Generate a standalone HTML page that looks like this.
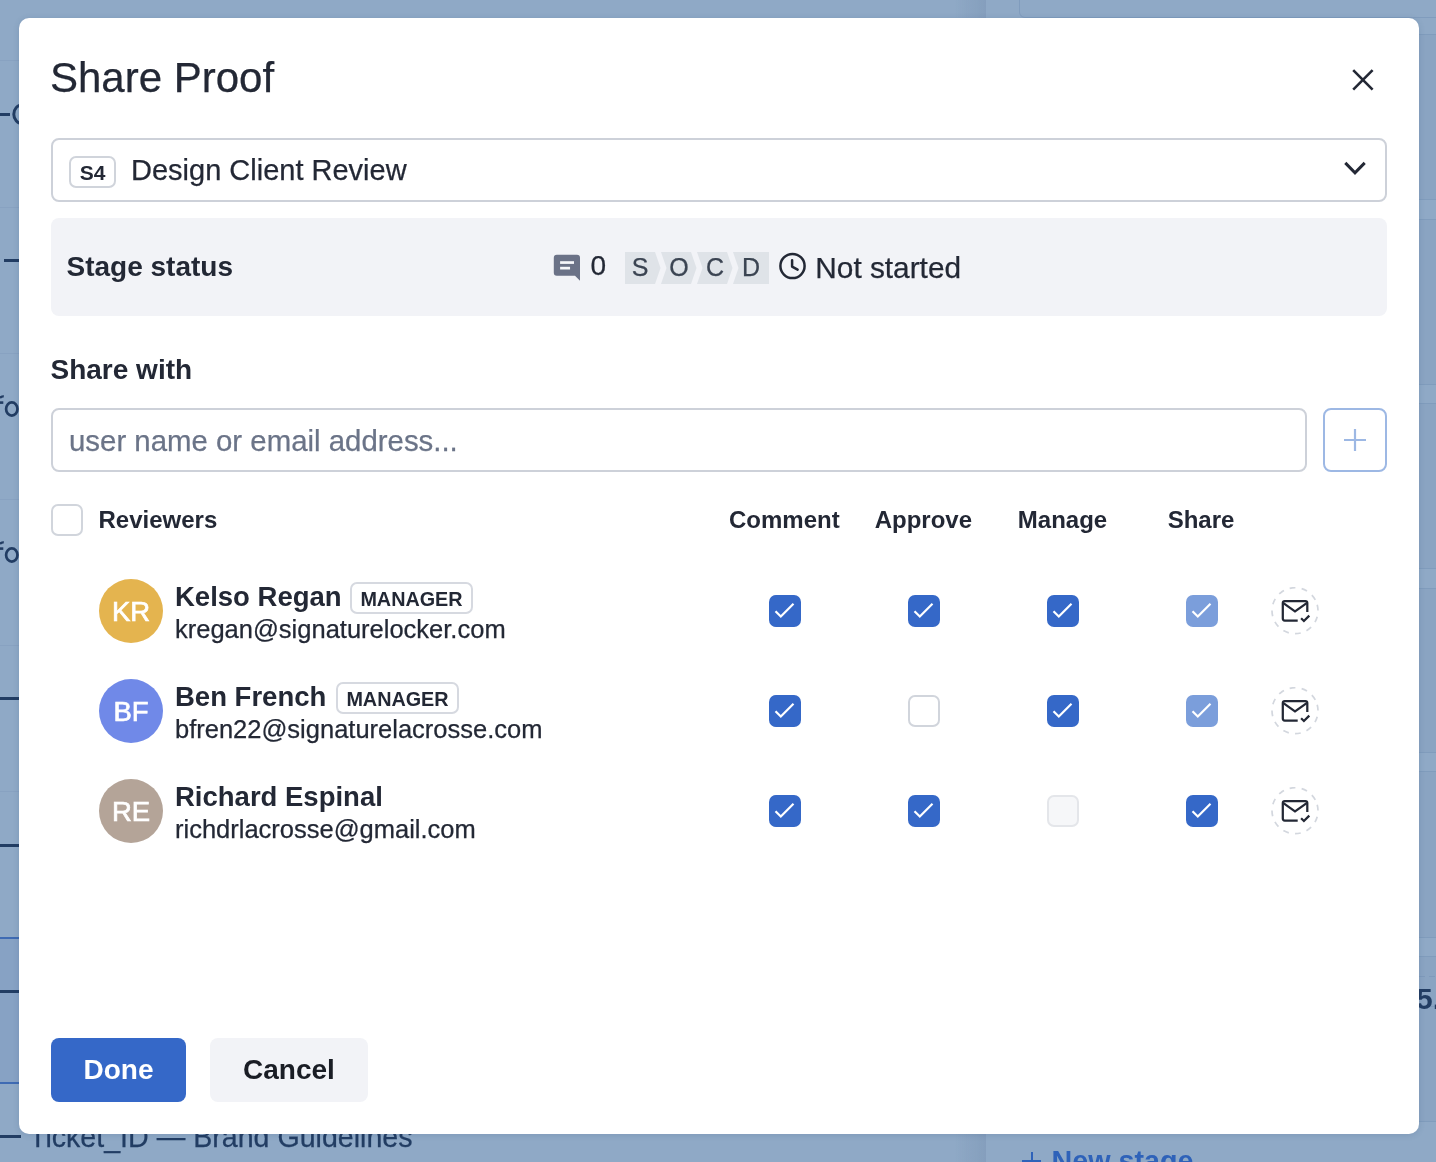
<!DOCTYPE html>
<html><head><meta charset="utf-8">
<style>
*{box-sizing:border-box;margin:0;padding:0}
html,body{width:1436px;height:1162px;overflow:hidden}
body{position:relative;background:#8fa9c6;font-family:"Liberation Sans",sans-serif;color:#232835}
.a{position:absolute;white-space:nowrap}
.t{position:absolute;white-space:nowrap;line-height:1;-webkit-text-stroke:0.25px currentColor}
.t.b,.t[style*="font-weight:700"]{-webkit-text-stroke:0}
.b{font-weight:700}
.modal{position:absolute;left:19px;top:18px;width:1400px;height:1116px;background:#fff;border-radius:10px;box-shadow:0 1px 6px rgba(40,70,110,0.16)}
.cb{position:absolute;width:32px;height:32px;border-radius:7px}
.cb.on{background:#3568c8}
.cb.lt{background:#7b9edb}
.cb.off{border:2px solid #d1d5dc;background:#fff}
.cb.dis{border:2px solid #e4e6ea;background:#f6f7f9}
.cb svg{position:absolute;left:0;top:0}
</style></head>
<body>
<div style="position:absolute;left:0;top:0;width:1436px;height:1162px;will-change:transform">
<div class="a" style="left:955px;top:0;width:31px;height:1162px;background:linear-gradient(to right,rgba(110,135,168,0),rgba(110,135,168,0.30))"></div><div class="a" style="left:986px;top:0;width:450px;height:1162px;background:#8fa9c6"></div><div class="a" style="left:1019px;top:-20px;width:440px;height:38px;border:1px solid #809cbd;border-radius:6px"></div><div class="a" style="left:1419px;top:34px;width:17px;height:166px;background:#8aa4c2;border-top:1px solid #809cbc;border-bottom:1px solid #809cbc"></div><div class="a" style="left:1419px;top:219px;width:17px;height:166px;background:#8aa4c2;border-top:1px solid #809cbc;border-bottom:1px solid #809cbc"></div><div class="a" style="left:1419px;top:403px;width:17px;height:166px;background:#8aa4c2;border-top:1px solid #809cbc;border-bottom:1px solid #809cbc"></div><div class="a" style="left:1419px;top:588px;width:17px;height:165px;background:#8aa4c2;border-top:1px solid #809cbc;border-bottom:1px solid #809cbc"></div><div class="a" style="left:1419px;top:771px;width:17px;height:167px;background:#8aa4c2;border-top:1px solid #809cbc;border-bottom:1px solid #809cbc"></div><div class="a" style="left:1419px;top:956px;width:17px;height:166px;background:#8aa4c2;border-top:1px solid #809cbc;border-bottom:1px solid #809cbc"></div><div class="a" style="left:1419px;top:976px;width:17px;height:1px;background-image:linear-gradient(to right,#7f9abb 60%,transparent 60%);background-size:10px 2px"></div><div class="a" style="left:1419px;top:1006px;width:17px;height:1px;background-image:linear-gradient(to right,#7f9abb 60%,transparent 60%);background-size:10px 2px"></div><div class="t b" style="left:1416px;top:983.61px;font-size:30px;color:#223d63">5.</div><div class="a" style="left:0;top:60px;width:19px;height:1px;background:#88a2c1"></div><div class="a" style="left:0;top:207px;width:19px;height:1px;background:#88a2c1"></div><div class="a" style="left:0;top:353px;width:19px;height:1px;background:#88a2c1"></div><div class="a" style="left:0;top:499px;width:19px;height:1px;background:#88a2c1"></div><div class="a" style="left:0;top:645px;width:19px;height:1px;background:#88a2c1"></div><div class="a" style="left:0;top:791px;width:19px;height:1px;background:#88a2c1"></div><div class="a" style="left:0;top:937px;width:19px;height:147px;background:#87a2c4;border-top:2px solid #3f6bb3;border-bottom:2px solid #3f6bb3"></div><div class="a" style="left:4px;top:259px;width:15px;height:3px;background:#223d63"></div><div class="a" style="left:0;top:697px;width:19px;height:3px;background:#223d63"></div><div class="a" style="left:0;top:844px;width:19px;height:3px;background:#223d63"></div><div class="a" style="left:0;top:990px;width:19px;height:3px;background:#223d63"></div><div class="a" style="left:0;top:113px;width:10px;height:3px;background:#223d63"></div><svg class="a" style="left:0;top:95px" width="19" height="40" viewBox="0 0 19 40"><ellipse cx="22" cy="19.2" rx="8.2" ry="9.3" stroke="#223d63" stroke-width="3" fill="none"/></svg><svg class="a" style="left:0;top:390px" width="19" height="35" viewBox="0 0 19 35"><ellipse cx="11.8" cy="19" rx="5.7" ry="6.6" stroke="#223d63" stroke-width="2.7" fill="none"/><rect x="0" y="11.3" width="3.3" height="2.6" fill="#223d63"/><path d="M0 7.7Q2 6.2 3.8 6.4" stroke="#223d63" stroke-width="2.4" fill="none"/></svg><svg class="a" style="left:0;top:536px" width="19" height="35" viewBox="0 0 19 35"><ellipse cx="11.8" cy="19" rx="5.7" ry="6.6" stroke="#223d63" stroke-width="2.7" fill="none"/><rect x="0" y="11.3" width="3.3" height="2.6" fill="#223d63"/><path d="M0 7.7Q2 6.2 3.8 6.4" stroke="#223d63" stroke-width="2.4" fill="none"/></svg><div class="a" style="left:0;top:1135px;width:21px;height:2.6px;background:#223d63"></div><div class="t" style="left:29px;top:1123.19px;font-size:28.6px;color:#223d63">Ticket_ID — Brand Guidelines</div><div class="t b" style="left:1051.5px;top:1147.45px;font-size:28.7px;color:#2e62b9">New stage</div><div class="a" style="left:1031px;top:1152px;width:2px;height:12px;background:#2e62b9"></div><div class="a" style="left:1022px;top:1160px;width:19px;height:2px;background:#2e62b9"></div>
<div class="modal"></div>
<div class="t" style="left:50px;top:56.85px;font-size:42px;">Share Proof</div><svg class="a" style="left:1348px;top:65px" width="30" height="30" viewBox="0 0 30 30"><path d="M5.2 5.2L24.6 24.6M24.6 5.2L5.2 24.6" stroke="#232835" stroke-width="2.6" fill="none"/></svg><div class="a" style="left:51px;top:138px;width:1336px;height:64px;border:2px solid #cdd1d9;border-radius:8px;"></div><div class="a" style="left:69px;top:156px;width:47px;height:32px;border:2px solid #d0d4db;border-radius:7px;"></div><div class="t" style="left:-107.5px;width:400px;text-align:center;top:162.32px;font-size:21px;font-weight:700;">S4</div><div class="t" style="left:131px;top:156.25px;font-size:29px;">Design Client Review</div><svg class="a" style="left:1340px;top:155px" width="30" height="26" viewBox="0 0 30 26"><path d="M5.3 7.9L15 17.8L24.7 7.9" stroke="#232835" stroke-width="3" fill="none"/></svg><div class="a" style="left:51px;top:218px;width:1336px;height:98px;background:#f2f3f7;border-radius:8px;"></div><div class="t" style="left:66.5px;top:252.5px;font-size:28px;font-weight:700;">Stage status</div><svg class="a" style="left:553px;top:254px" width="28" height="28" viewBox="0 0 28 28"><path d="M3.8 0.8H24A3 3 0 0 1 27 3.8V26.7L22 21.8H3.8A3 3 0 0 1 0.8 18.8V3.8A3 3 0 0 1 3.8 0.8Z" fill="#6b7287"/><rect x="7.1" y="7.2" width="13.9" height="2.7" fill="#f6f7fa"/><rect x="7.1" y="12.8" width="9.95" height="2.7" fill="#f6f7fa"/></svg><div class="t" style="left:590.5px;top:251.7px;font-size:28px;">0</div><svg class="a" style="left:0;top:0" width="1436" height="400" viewBox="0 0 1436 400"><polygon points="625,252 655,252 660.5,268 655,284 625,284" fill="#dfe3e8"/><polygon points="661,252 691,252 696.5,268 691,284 661,284 666.5,268" fill="#dfe3e8"/><polygon points="697,252 727,252 732.5,268 727,284 697,284 702.5,268" fill="#dfe3e8"/><polygon points="733,252 769,252 769,284 733,284 738.5,268" fill="#dfe3e8"/></svg><div class="t" style="left:440px;width:400px;text-align:center;top:254.64px;font-size:25px;color:#3b4452;">S</div><div class="t" style="left:479px;width:400px;text-align:center;top:254.64px;font-size:25px;color:#3b4452;">O</div><div class="t" style="left:515px;width:400px;text-align:center;top:254.64px;font-size:25px;color:#3b4452;">C</div><div class="t" style="left:551px;width:400px;text-align:center;top:254.64px;font-size:25px;color:#3b4452;">D</div><svg class="a" style="left:777px;top:251px" width="30" height="30" viewBox="0 0 30 30"><circle cx="15.5" cy="15" r="12.1" stroke="#232835" stroke-width="2.5" fill="none"/><path d="M15.1 9.35V15.6L20.6 18.6" stroke="#232835" stroke-width="2.5" fill="none" stroke-linecap="round" stroke-linejoin="round"/></svg><div class="t" style="left:815.3px;top:252.67px;font-size:29.8px;">Not started</div><div class="t" style="left:50.5px;top:356.3px;font-size:28px;font-weight:700;">Share with</div><div class="a" style="left:51px;top:408px;width:1256px;height:64px;border:2px solid #cdd1d9;border-radius:8px;"></div><div class="t" style="left:69px;top:425.61px;font-size:29.4px;color:#6b7488;">user name or email address...</div><div class="a" style="left:1323px;top:408px;width:64px;height:64px;border:2px solid #9db8e4;border-radius:8px;"></div><svg class="a" style="left:1323px;top:408px" width="64" height="64" viewBox="0 0 64 64"><path d="M21 32H43M32 21V43" stroke="#9db8e4" stroke-width="2.2" fill="none"/></svg><div class="cb off" style="left:51px;top:504px"></div><div class="t" style="left:98.5px;top:507.68px;font-size:24px;font-weight:700;">Reviewers</div><div class="t" style="left:584.3px;width:400px;text-align:center;top:507.78px;font-size:24px;font-weight:700;">Comment</div><div class="t" style="left:723.4px;width:400px;text-align:center;top:507.78px;font-size:24px;font-weight:700;">Approve</div><div class="t" style="left:862.5px;width:400px;text-align:center;top:507.78px;font-size:24px;font-weight:700;">Manage</div><div class="t" style="left:1001px;width:400px;text-align:center;top:507.78px;font-size:24px;font-weight:700;">Share</div><div class="a" style="left:99px;top:579px;width:64px;height:64px;border-radius:50%;background:#e4b44f"></div><div class="t" style="left:-69px;width:400px;text-align:center;top:597.62px;font-size:27.5px;color:#fff;-webkit-text-stroke:0.7px #fff;">KR</div><div class="t" style="left:175px;top:582.72px;font-size:27.5px;font-weight:700;">Kelso Regan</div><div class="a" style="left:350px;top:582px;width:123px;height:31.5px;border:2px solid #d6d9e0;border-radius:7px;"></div><div class="t" style="left:211.5px;width:400px;text-align:center;top:589.74px;font-size:19.8px;font-weight:700;">MANAGER</div><div class="t" style="left:175px;top:617.21px;font-size:25.5px;">kregan@signaturelocker.com</div><div class="cb on" style="left:769px;top:595px"><svg width="32" height="32" viewBox="0 0 32 32"><path d="M6.5 16.2L11.8 21.5L24.5 8.8" stroke="#fff" stroke-width="2.2" fill="none"/></svg></div><div class="cb on" style="left:908px;top:595px"><svg width="32" height="32" viewBox="0 0 32 32"><path d="M6.5 16.2L11.8 21.5L24.5 8.8" stroke="#fff" stroke-width="2.2" fill="none"/></svg></div><div class="cb on" style="left:1047px;top:595px"><svg width="32" height="32" viewBox="0 0 32 32"><path d="M6.5 16.2L11.8 21.5L24.5 8.8" stroke="#fff" stroke-width="2.2" fill="none"/></svg></div><div class="cb lt" style="left:1186px;top:595px"><svg width="32" height="32" viewBox="0 0 32 32"><path d="M6.5 16.2L11.8 21.5L24.5 8.8" stroke="#fff" stroke-width="2.2" fill="none"/></svg></div><svg class="a" style="left:1271px;top:587px" width="48" height="48" viewBox="0 0 48 48"><circle cx="24" cy="23.7" r="23" stroke="#d3d7de" stroke-width="1.7" fill="none" stroke-dasharray="5.8 6.24" transform="rotate(-15 24 23.7)"/><path d="M26.7 33.6H13.8A2 2 0 0 1 11.8 31.6V16.1A2 2 0 0 1 13.8 14.1H34.3A2 2 0 0 1 36.3 16.1V25" stroke="#232835" stroke-width="2.25" fill="none"/><path d="M12.4 16.2L24 24.3L35.7 16.2" stroke="#232835" stroke-width="2.25" fill="none"/><path d="M30.1 31.3L32.9 34L38.3 28.6" stroke="#232835" stroke-width="2.25" fill="none"/></svg><div class="a" style="left:99px;top:679px;width:64px;height:64px;border-radius:50%;background:#7089e8"></div><div class="t" style="left:-69px;width:400px;text-align:center;top:697.62px;font-size:27.5px;color:#fff;-webkit-text-stroke:0.7px #fff;">BF</div><div class="t" style="left:175px;top:682.72px;font-size:27.5px;font-weight:700;">Ben French</div><div class="a" style="left:336px;top:682px;width:123px;height:31.5px;border:2px solid #d6d9e0;border-radius:7px;"></div><div class="t" style="left:197.5px;width:400px;text-align:center;top:689.74px;font-size:19.8px;font-weight:700;">MANAGER</div><div class="t" style="left:175px;top:717.21px;font-size:25.5px;">bfren22@signaturelacrosse.com</div><div class="cb on" style="left:769px;top:695px"><svg width="32" height="32" viewBox="0 0 32 32"><path d="M6.5 16.2L11.8 21.5L24.5 8.8" stroke="#fff" stroke-width="2.2" fill="none"/></svg></div><div class="cb off" style="left:908px;top:695px"></div><div class="cb on" style="left:1047px;top:695px"><svg width="32" height="32" viewBox="0 0 32 32"><path d="M6.5 16.2L11.8 21.5L24.5 8.8" stroke="#fff" stroke-width="2.2" fill="none"/></svg></div><div class="cb lt" style="left:1186px;top:695px"><svg width="32" height="32" viewBox="0 0 32 32"><path d="M6.5 16.2L11.8 21.5L24.5 8.8" stroke="#fff" stroke-width="2.2" fill="none"/></svg></div><svg class="a" style="left:1271px;top:687px" width="48" height="48" viewBox="0 0 48 48"><circle cx="24" cy="23.7" r="23" stroke="#d3d7de" stroke-width="1.7" fill="none" stroke-dasharray="5.8 6.24" transform="rotate(-15 24 23.7)"/><path d="M26.7 33.6H13.8A2 2 0 0 1 11.8 31.6V16.1A2 2 0 0 1 13.8 14.1H34.3A2 2 0 0 1 36.3 16.1V25" stroke="#232835" stroke-width="2.25" fill="none"/><path d="M12.4 16.2L24 24.3L35.7 16.2" stroke="#232835" stroke-width="2.25" fill="none"/><path d="M30.1 31.3L32.9 34L38.3 28.6" stroke="#232835" stroke-width="2.25" fill="none"/></svg><div class="a" style="left:99px;top:779px;width:64px;height:64px;border-radius:50%;background:#b4a498"></div><div class="t" style="left:-69px;width:400px;text-align:center;top:797.62px;font-size:27.5px;color:#fff;-webkit-text-stroke:0.7px #fff;">RE</div><div class="t" style="left:175px;top:782.72px;font-size:27.5px;font-weight:700;">Richard Espinal</div><div class="t" style="left:175px;top:817.21px;font-size:25.5px;">richdrlacrosse@gmail.com</div><div class="cb on" style="left:769px;top:795px"><svg width="32" height="32" viewBox="0 0 32 32"><path d="M6.5 16.2L11.8 21.5L24.5 8.8" stroke="#fff" stroke-width="2.2" fill="none"/></svg></div><div class="cb on" style="left:908px;top:795px"><svg width="32" height="32" viewBox="0 0 32 32"><path d="M6.5 16.2L11.8 21.5L24.5 8.8" stroke="#fff" stroke-width="2.2" fill="none"/></svg></div><div class="cb dis" style="left:1047px;top:795px"></div><div class="cb on" style="left:1186px;top:795px"><svg width="32" height="32" viewBox="0 0 32 32"><path d="M6.5 16.2L11.8 21.5L24.5 8.8" stroke="#fff" stroke-width="2.2" fill="none"/></svg></div><svg class="a" style="left:1271px;top:787px" width="48" height="48" viewBox="0 0 48 48"><circle cx="24" cy="23.7" r="23" stroke="#d3d7de" stroke-width="1.7" fill="none" stroke-dasharray="5.8 6.24" transform="rotate(-15 24 23.7)"/><path d="M26.7 33.6H13.8A2 2 0 0 1 11.8 31.6V16.1A2 2 0 0 1 13.8 14.1H34.3A2 2 0 0 1 36.3 16.1V25" stroke="#232835" stroke-width="2.25" fill="none"/><path d="M12.4 16.2L24 24.3L35.7 16.2" stroke="#232835" stroke-width="2.25" fill="none"/><path d="M30.1 31.3L32.9 34L38.3 28.6" stroke="#232835" stroke-width="2.25" fill="none"/></svg><div class="a" style="left:51px;top:1038px;width:135px;height:64px;background:#3568c8;border-radius:8px;"></div><div class="t" style="left:-81.5px;width:400px;text-align:center;top:1056.0px;font-size:28px;font-weight:700;color:#fff;">Done</div><div class="a" style="left:210px;top:1038px;width:158px;height:64px;background:#f2f3f7;border-radius:8px;"></div><div class="t" style="left:89px;width:400px;text-align:center;top:1056.0px;font-size:28px;font-weight:700;color:#1a1d25;">Cancel</div>
</div>
</body></html>
